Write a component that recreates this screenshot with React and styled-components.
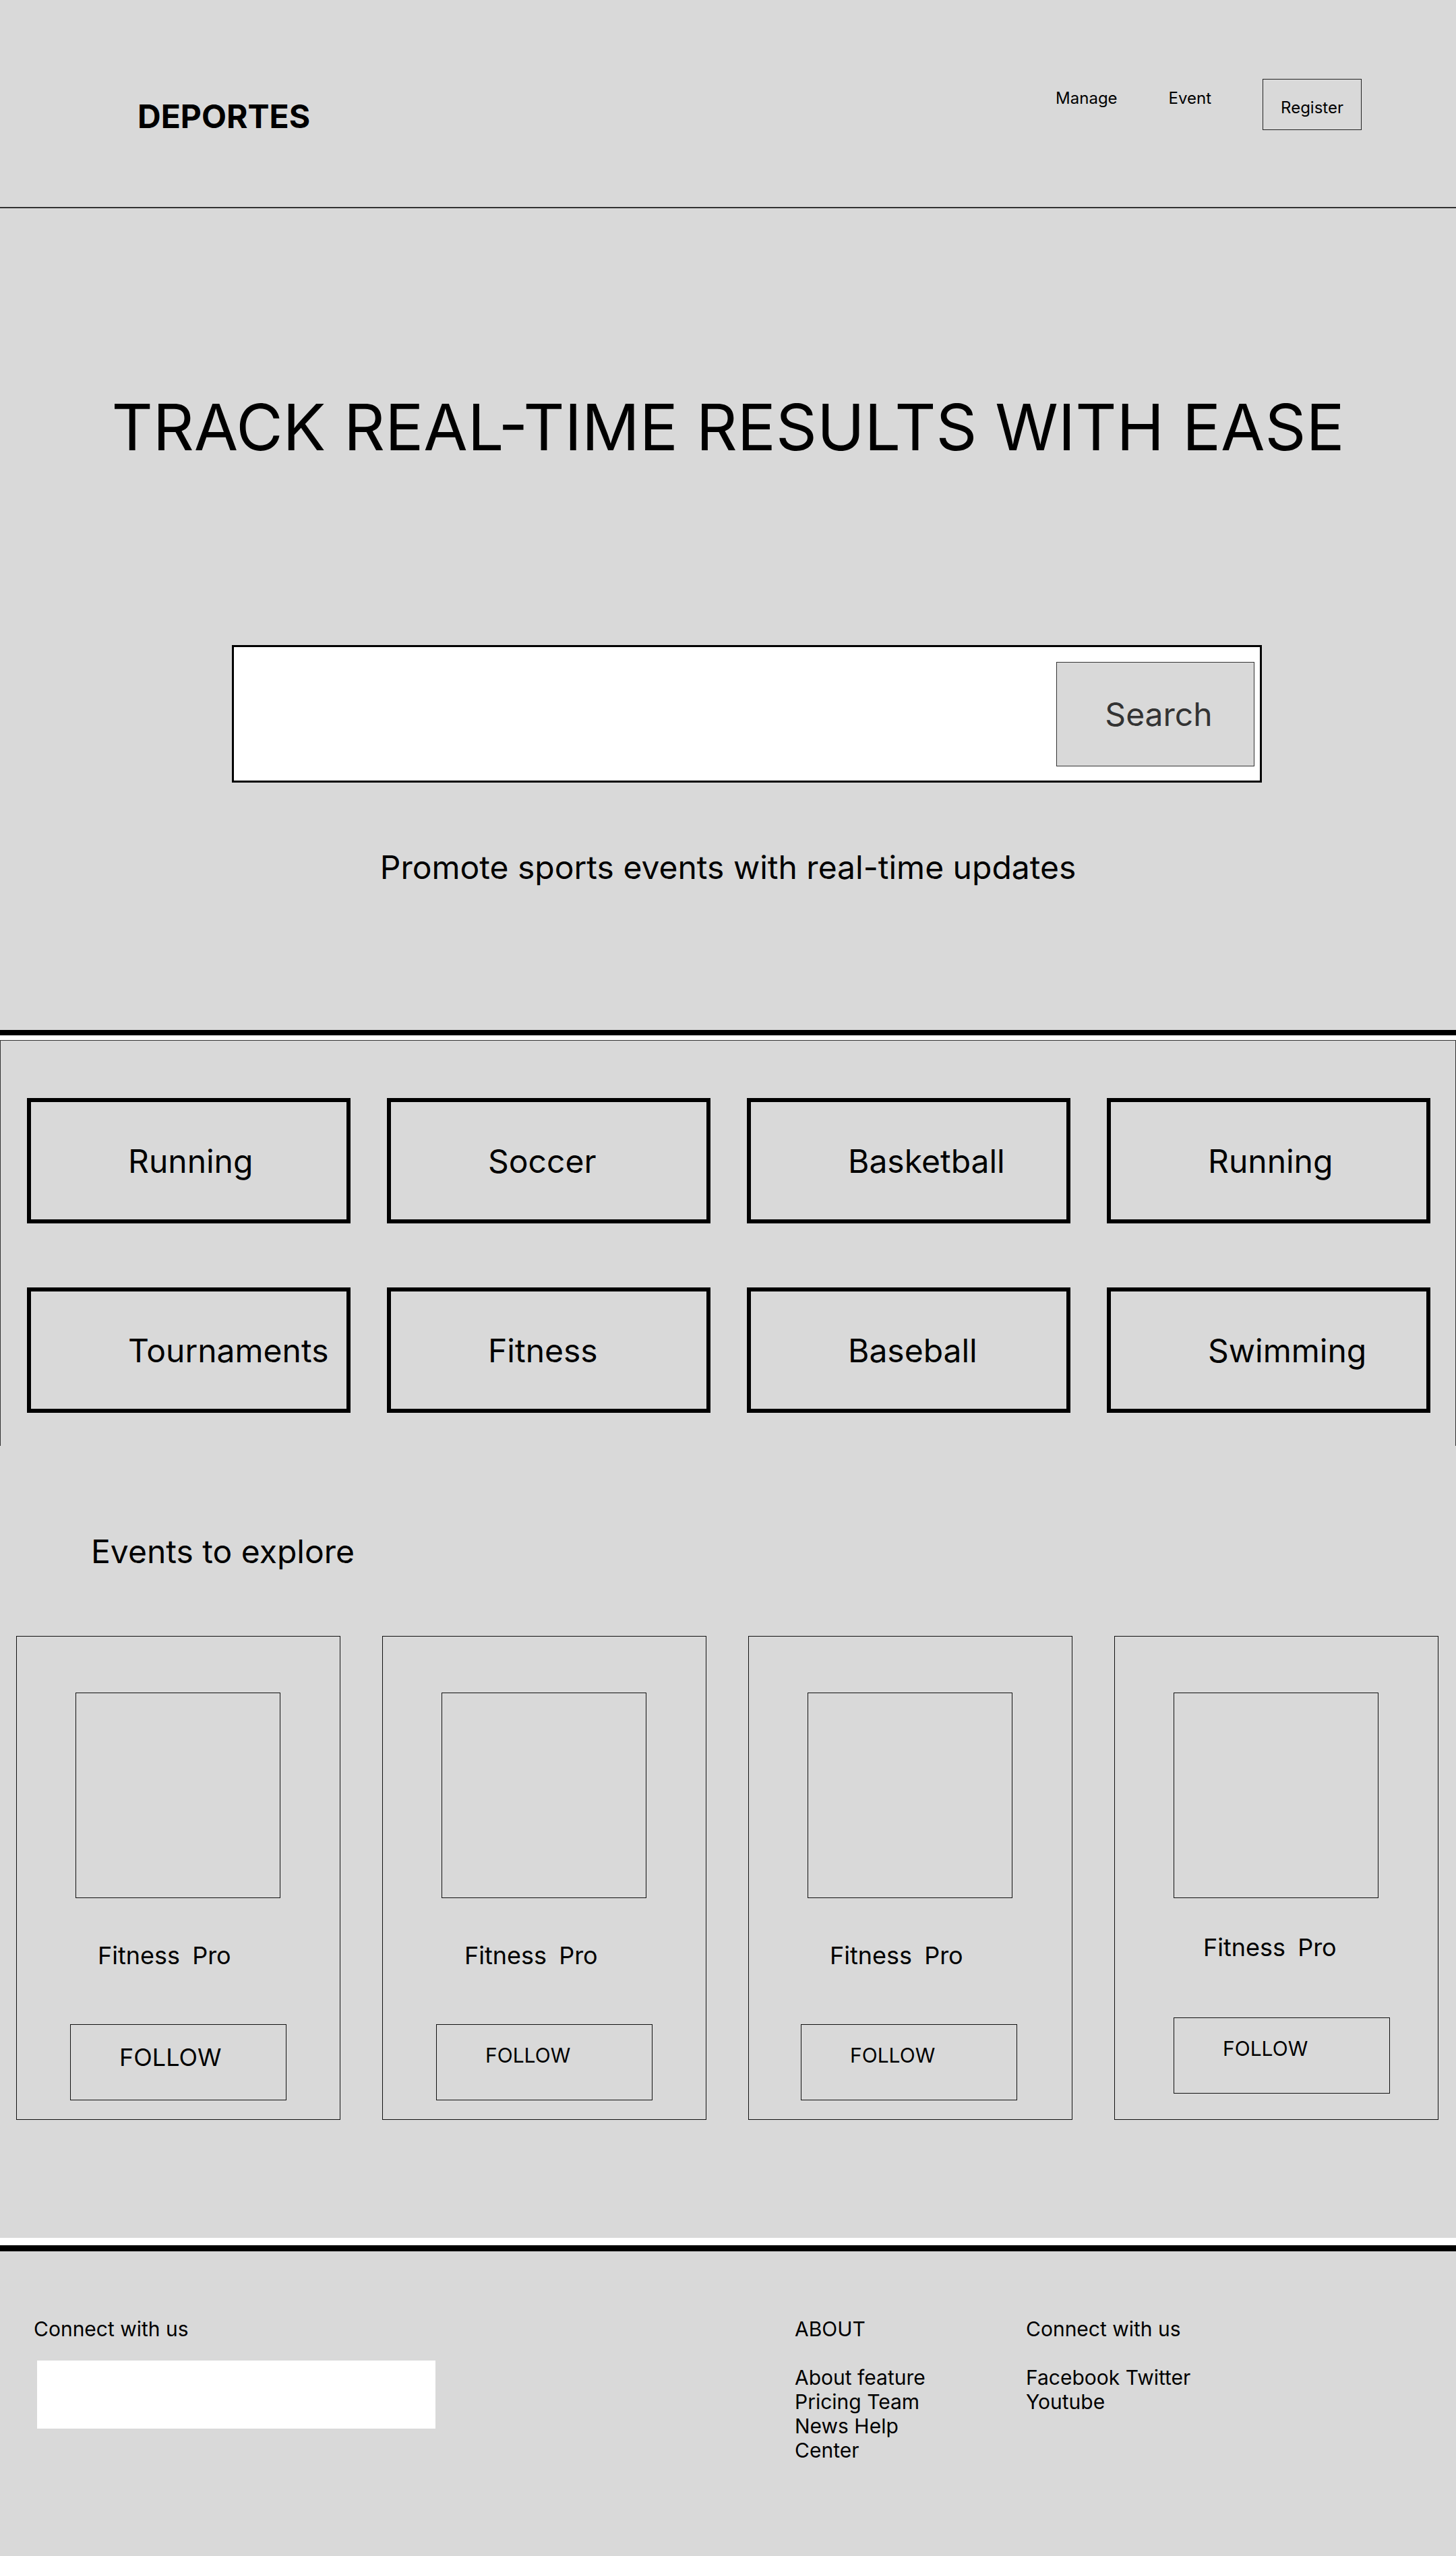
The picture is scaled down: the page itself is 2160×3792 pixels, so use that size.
import React from "react";
import styled, { createGlobalStyle } from "styled-components";

const GlobalStyle = createGlobalStyle`
  * {
    box-sizing: border-box;
  }

  body {
    margin: 0;
    background-color: #d9d9d9;
    color: #000;
    font-family: Inter, "Noto Sans", sans-serif;
  }
`;

const Page = styled.div`
  width: 2160px;
  min-height: 3792px;
  background-color: #d9d9d9;
`;

/* header */

const Header = styled.header`
  height: 309px;
  padding: 117px 140px 0 204px;

  display: flex;
  justify-content: space-between;
  align-items: flex-start;

  border-bottom: 2px solid #333;
`;

const Logo = styled.h1`
  margin: 26px 0 0 0;
  font-size: 48px;
  font-weight: 700;
  line-height: normal;
`;

const Nav = styled.nav`
  display: flex;
  align-items: flex-start;
  gap: 76px;
`;

const NavLink = styled.a`
  margin-top: 14px;
  font-size: 24px;
  line-height: normal;
  color: #000;
  text-decoration: none;
`;

const RegisterButton = styled.button`
  padding: 27px 26px 18px 26px;

  font-family: inherit;
  font-size: 24px;
  line-height: normal;
  color: #000;

  background-color: transparent;
  border: 1px solid #222;
`;

/* hero */

const Hero = styled.section`
  padding: 267px 0 212px 0;
`;

const Title = styled.h2`
  margin: 0;
  font-size: 95px;
  font-weight: 400;
  line-height: normal;
  text-align: center;
`;

const SearchBar = styled.div`
  width: 1528px;
  height: 204px;
  margin: 266px 0 0 344px;
  padding: 22px 8px 21px 0;

  display: flex;
  justify-content: flex-end;

  background-color: #fff;
  border: 3px solid #000;
`;

const SearchButton = styled.button`
  width: 294px;
  height: 155px;
  padding: 0 0 0 10px;

  display: flex;
  align-items: center;
  justify-content: center;

  font-family: inherit;
  font-size: 48px;
  color: #333;

  background-color: #d9d9d9;
  border: 1px solid #333;
`;

const Tagline = styled.p`
  margin: 96px 0 0 0;
  font-size: 48px;
  line-height: normal;
  text-align: center;
`;

const Rule = styled.div`
  height: 0;
  border-top: ${(p) => p.$top};
  border-bottom: ${(p) => p.$bottom};
`;

/* categories */

const CategorySection = styled.section`
  padding: 85px 0 49px 39px;

  border: 1px solid #333;
  border-bottom: none;
`;

const CategoryGrid = styled.div`
  display: grid;
  grid-template-columns: repeat(4, 480px);
  column-gap: 54px;
  row-gap: 95px;
`;

const CategoryTile = styled.div`
  height: 186px;
  padding-left: 144px;

  display: flex;
  align-items: center;

  font-size: 48px;
  line-height: normal;

  border: 6px solid #000;
`;

/* events */

const EventsSection = styled.section`
  padding: 127px 0 175px 24px;
`;

const SectionTitle = styled.h3`
  margin: 0 0 0 111px;
  font-size: 48px;
  font-weight: 400;
  line-height: normal;
`;

const CardGrid = styled.div`
  margin-top: 96px;

  display: grid;
  grid-template-columns: repeat(4, 481px);
  column-gap: 62px;
`;

const EventCard = styled.article`
  height: 718px;
  padding-top: 83px;

  display: flex;
  flex-direction: column;
  align-items: flex-start;

  border: 1px solid #111;
`;

const CardImage = styled.div`
  width: 304px;
  height: 305px;
  margin-left: 87px;

  border: 1px solid #111;
`;

const CardName = styled.p`
  margin: ${(p) => 63 - p.$lift}px 0 0 ${(p) => p.$nameX}px;
  font-size: 36px;
  line-height: normal;
  word-spacing: 8px;
`;

const FollowButton = styled.button`
  width: 321px;
  height: 113px;
  margin: ${(p) => 80 + p.$lift / 6}px 0 0 ${(p) => p.$btnX}px;
  padding: ${(p) => (p.$size > 32 ? 26 : 27)}px 0 0 72px;

  display: flex;
  align-items: flex-start;
  justify-content: flex-start;

  font-family: inherit;
  font-size: ${(p) => p.$size}px;
  line-height: normal;
  color: #000;

  background-color: transparent;
  border: 1px solid #111;
`;

/* footer */

const Footer = styled.footer`
  padding: 97px 0 120px 50px;

  display: grid;
  grid-template-columns: 1129px 343px 1fr;
  align-items: start;

  font-size: 30px;
  line-height: normal;
`;

const FooterHeading = styled.h4`
  margin: 0;
  font-size: 30px;
  font-weight: 400;
  line-height: normal;
`;

const NewsletterBox = styled.div`
  width: 591px;
  height: 101px;
  margin: 29px 0 0 5px;

  background-color: #fff;
`;

const FooterLinks = styled.p`
  max-width: ${(p) => p.$width}px;
  margin: 36px 0 0 0;
`;

const categories = [
  "Running",
  "Soccer",
  "Basketball",
  "Running",
  "Tournaments",
  "Fitness",
  "Baseball",
  "Swimming",
];

const events = [
  { id: 1, followSize: 36, nameX: 120, btnX: 79, lift: 0 },
  { id: 2, followSize: 30, nameX: 121, btnX: 79, lift: 0 },
  { id: 3, followSize: 30, nameX: 120, btnX: 77, lift: 0 },
  { id: 4, followSize: 30, nameX: 131, btnX: 87, lift: 12 },
];

const App = () => {
  return (
    <Page>
      <GlobalStyle />

      <Header>
        <Logo>DEPORTES</Logo>

        <Nav>
          <NavLink href="#">Manage</NavLink>
          <NavLink href="#">Event</NavLink>
          <RegisterButton>Register</RegisterButton>
        </Nav>
      </Header>

      <Hero>
        <Title>TRACK REAL-TIME RESULTS WITH EASE</Title>

        <SearchBar>
          <SearchButton>Search</SearchButton>
        </SearchBar>

        <Tagline>Promote sports events with real-time updates</Tagline>
      </Hero>

      <Rule $top="8px solid #000" $bottom="7px solid #fff" />

      <CategorySection>
        <CategoryGrid>
          {categories.map((name, i) => (
            <CategoryTile key={i}>{name}</CategoryTile>
          ))}
        </CategoryGrid>
      </CategorySection>

      <EventsSection>
        <SectionTitle>Events to explore</SectionTitle>

        <CardGrid>
          {events.map((ev) => (
            <EventCard key={ev.id}>
              <CardImage />
              <CardName $nameX={ev.nameX} $lift={ev.lift}>
                Fitness Pro
              </CardName>
              <FollowButton
                $size={ev.followSize}
                $btnX={ev.btnX}
                $lift={ev.lift}
              >
                FOLLOW
              </FollowButton>
            </EventCard>
          ))}
        </CardGrid>
      </EventsSection>

      <Rule $top="11px solid #fff" $bottom="9px solid #000" />

      <Footer>
        <div>
          <FooterHeading>Connect with us</FooterHeading>
          <NewsletterBox />
        </div>

        <div>
          <FooterHeading>ABOUT</FooterHeading>
          <FooterLinks $width={230}>
            About feature Pricing Team News Help Center
          </FooterLinks>
        </div>

        <div>
          <FooterHeading>Connect with us</FooterHeading>
          <FooterLinks $width={300}>Facebook Twitter Youtube</FooterLinks>
        </div>
      </Footer>
    </Page>
  );
};

export default App;
